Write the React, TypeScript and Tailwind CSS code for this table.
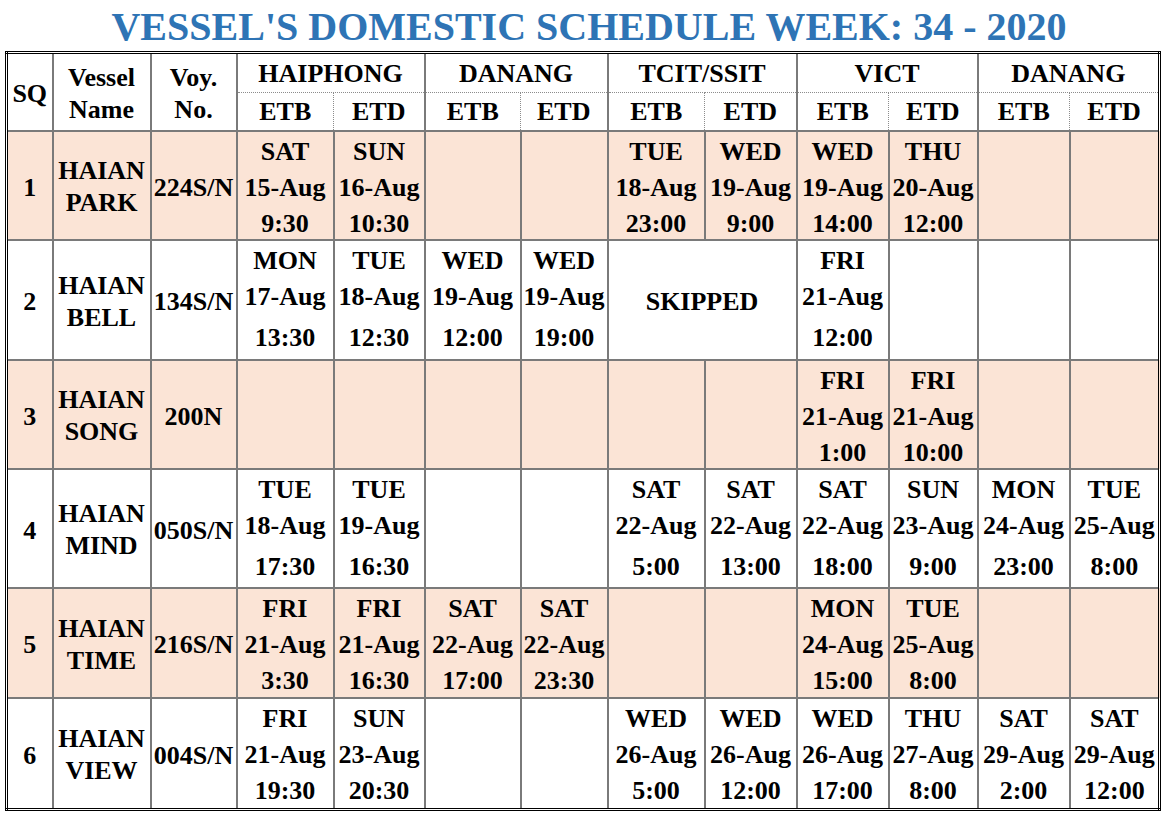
type Slot = string[] | null | "SKIPPED";

interface Voyage {
    sq: number;
    name: [string, string];
    voy: string;
    slots: Slot[];
    shaded: boolean;
    loose?: boolean;
}

const PORTS = ["HAIPHONG", "DANANG", "TCIT/SSIT", "VICT", "DANANG"];
const COL_WIDTHS = [46, 98, 86, 97, 91, 96, 87, 97, 92, 92, 89, 92, 90];

const voyages: Voyage[] = [
    {
        sq: 1,
        name: ["HAIAN", "PARK"],
        voy: "224S/N",
        shaded: true,
        slots: [
            ["SAT", "15-Aug", "9:30"],
            ["SUN", "16-Aug", "10:30"],
            null,
            null,
            ["TUE", "18-Aug", "23:00"],
            ["WED", "19-Aug", "9:00"],
            ["WED", "19-Aug", "14:00"],
            ["THU", "20-Aug", "12:00"],
            null,
            null,
        ],
    },
    {
        sq: 2,
        name: ["HAIAN", "BELL"],
        voy: "134S/N",
        shaded: false,
        loose: true,
        slots: [
            ["MON", "17-Aug", "13:30"],
            ["TUE", "18-Aug", "12:30"],
            ["WED", "19-Aug", "12:00"],
            ["WED", "19-Aug", "19:00"],
            "SKIPPED",
            ["FRI", "21-Aug", "12:00"],
            null,
            null,
            null,
        ],
    },
    {
        sq: 3,
        name: ["HAIAN", "SONG"],
        voy: "200N",
        shaded: true,
        slots: [
            null,
            null,
            null,
            null,
            null,
            null,
            ["FRI", "21-Aug", "1:00"],
            ["FRI", "21-Aug", "10:00"],
            null,
            null,
        ],
    },
    {
        sq: 4,
        name: ["HAIAN", "MIND"],
        voy: "050S/N",
        shaded: false,
        loose: true,
        slots: [
            ["TUE", "18-Aug", "17:30"],
            ["TUE", "19-Aug", "16:30"],
            null,
            null,
            ["SAT", "22-Aug", "5:00"],
            ["SAT", "22-Aug", "13:00"],
            ["SAT", "22-Aug", "18:00"],
            ["SUN", "23-Aug", "9:00"],
            ["MON", "24-Aug", "23:00"],
            ["TUE", "25-Aug", "8:00"],
        ],
    },
    {
        sq: 5,
        name: ["HAIAN", "TIME"],
        voy: "216S/N",
        shaded: true,
        slots: [
            ["FRI", "21-Aug", "3:30"],
            ["FRI", "21-Aug", "16:30"],
            ["SAT", "22-Aug", "17:00"],
            ["SAT", "22-Aug", "23:30"],
            null,
            null,
            ["MON", "24-Aug", "15:00"],
            ["TUE", "25-Aug", "8:00"],
            null,
            null,
        ],
    },
    {
        sq: 6,
        name: ["HAIAN", "VIEW"],
        voy: "004S/N",
        shaded: false,
        slots: [
            ["FRI", "21-Aug", "19:30"],
            ["SUN", "23-Aug", "20:30"],
            null,
            null,
            ["WED", "26-Aug", "5:00"],
            ["WED", "26-Aug", "12:00"],
            ["WED", "26-Aug", "17:00"],
            ["THU", "27-Aug", "8:00"],
            ["SAT", "29-Aug", "2:00"],
            ["SAT", "29-Aug", "12:00"],
        ],
    },
];

const ROW_HEIGHTS = ["h-[109px]", "h-[120px]", "h-[109px]", "h-[119px]", "h-[110px]", "h-[112px]"];

const cell = "border-2 border-solid border-[#7a7a7a] p-0 text-center";
const mid = "align-middle pt-[4px]";

function SlotCell({ slot, loose }: { slot: Slot; loose?: boolean }) {
    if (slot === "SKIPPED") {
        return (
            <td colSpan={2} className={`${cell} ${mid} leading-[36px]`}>
                SKIPPED
            </td>
        );
    }
    if (!slot) return <td className={cell} />;
    return (
        <td className={`${cell} align-top whitespace-nowrap`}>
            {/* fixed box so the row keeps its own height */}
            <div className="h-[90px] pt-[2px] leading-[36px]">
                <div>{slot[0]}</div>
                <div>{slot[1]}</div>
                <div className={loose ? "mt-[5px]" : ""}>{slot[2]}</div>
            </div>
        </td>
    );
}

export default function App() {
    return (
        <div className="w-[1170px] h-[817px] bg-white overflow-hidden font-['Liberation_Serif','Times_New_Roman',serif] font-bold text-black">
            {/* 标题 */}
            <div className="h-[51px] pt-[7px] pl-[8px] text-center text-[40px] leading-[40px] text-[#2e74b5] whitespace-nowrap">
                VESSEL'S DOMESTIC SCHEDULE WEEK: 34 - 2020
            </div>

            <table className="ml-[5px] w-[1156px] table-fixed border-collapse border-[3px] border-double border-black text-[26px]">
                <colgroup>
                    {COL_WIDTHS.map((w, i) => (
                        <col key={i} style={{ width: w }} />
                    ))}
                </colgroup>
                <thead>
                    <tr className="h-[40px]">
                        <th rowSpan={2} className={`${cell} ${mid} leading-[32px]`}>
                            SQ
                        </th>
                        <th rowSpan={2} className={`${cell} ${mid} leading-[32px]`}>
                            Vessel
                            <br />
                            Name
                        </th>
                        <th rowSpan={2} className={`${cell} ${mid} leading-[32px]`}>
                            Voy.
                            <br />
                            No.
                        </th>
                        {PORTS.map((p, i) => (
                            <th
                                key={i}
                                colSpan={2}
                                className={`${cell} align-middle pt-[2px] leading-[34px] border-b border-b-[#8c8c8c] [border-bottom-style:dotted]`}
                            >
                                {p}
                            </th>
                        ))}
                    </tr>
                    <tr className="h-[38px]">
                        {PORTS.map((_, i) => (
                            <>
                                <th
                                    key={`b${i}`}
                                    className={`${cell} align-middle pt-[2px] leading-[34px] border-t border-t-[#8c8c8c] [border-top-style:dotted] border-r border-r-[#8c8c8c] [border-right-style:dotted]`}
                                >
                                    ETB
                                </th>
                                <th
                                    key={`d${i}`}
                                    className={`${cell} align-middle pt-[2px] leading-[34px] border-t border-t-[#8c8c8c] [border-top-style:dotted] border-l border-l-[#8c8c8c] [border-left-style:dotted]`}
                                >
                                    ETD
                                </th>
                            </>
                        ))}
                    </tr>
                </thead>
                <tbody>
                    {voyages.map((v, r) => (
                        <tr key={v.sq} className={`${ROW_HEIGHTS[r]} ${v.shaded ? "bg-[#fbe4d6]" : "bg-white"}`}>
                            <td className={`${cell} ${mid}`}>{v.sq}</td>
                            <td className={`${cell} ${mid} leading-[32px]`}>
                                {v.name[0]}
                                <br />
                                {v.name[1]}
                            </td>
                            <td className={`${cell} ${mid} whitespace-nowrap`}>{v.voy}</td>
                            {v.slots.map((s, i) => (
                                <SlotCell key={i} slot={s} loose={v.loose} />
                            ))}
                        </tr>
                    ))}
                </tbody>
            </table>
        </div>
    );
}
